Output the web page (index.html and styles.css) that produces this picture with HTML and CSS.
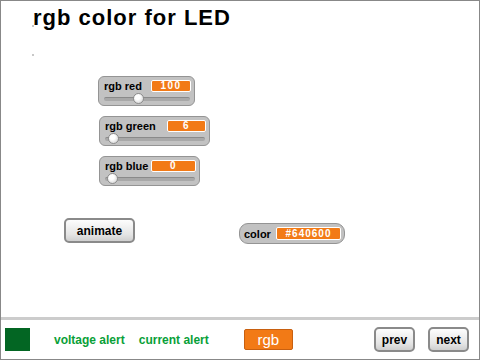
FILE: index.html
```html
<!doctype html>
<html lang="en">
<head>
	<meta charset="UTF-8">
	<title>rgb color for LED</title>
	<link rel="stylesheet" href="styles.css">
</head>
<body>
	<div id="frame">
		<div id="stage">
			<span class="dot dot1"></span>
			<span class="dot dot2"></span>
			<h1 class="title">rgb color for LED</h1>
			<div class="watchers">
				<div class="watcher red">
					<div class="row"><span class="label">rgb red</span><span class="value">100</span></div>
					<div class="slider"><div class="track"></div><span class="knob" style="left:29px"></span></div>
				</div>
				<div class="watcher green">
					<div class="row"><span class="label">rgb green</span><span class="value">6</span></div>
					<div class="slider"><div class="track"></div><span class="knob" style="left:3px"></span></div>
				</div>
				<div class="watcher blue">
					<div class="row"><span class="label">rgb blue</span><span class="value">0</span></div>
					<div class="slider"><div class="track"></div><span class="knob" style="left:2px"></span></div>
				</div>
			</div>
			<div class="actions">
				<div class="btn animate">animate</div>
				<div class="readout"><span class="label">color</span><span class="value">#640600</span></div>
			</div>
		</div>
		<div id="bar">
			<span class="swatch"></span>
			<span class="alert voltage">voltage alert</span>
			<span class="alert current">current alert</span>
			<span class="rgb">rgb</span>
			<div class="btn prev">prev</div>
			<div class="btn next">next</div>
		</div>
	</div>
</body>
</html>
```

FILE: styles.css
```css
*{
	margin:0;
	padding:0;
	box-sizing:border-box;
}
body{
	font-family:"Liberation Sans", Arial, sans-serif;
	background:#fff;
}
#frame{
	width:480px;
	height:360px;
	border:1px solid #888;
	display:flex;
	flex-direction:column;
}
#stage{
	position:relative;
	height:316px;
	display:flex;
	flex-direction:column;
	align-items:flex-start;
}
.dot{
	position:absolute;
	left:31px;
	width:2px;
	height:2px;
	background:#c8c8c8;
}
.dot1{ top:24px; }
.dot2{ top:53px; }
.title{
	font-size:22px;
	line-height:24px;
	font-weight:bold;
	letter-spacing:1px;
	color:#000;
	margin:5px 0 0 32px;
}
.watchers{
	display:flex;
	flex-direction:column;
	align-items:flex-start;
	gap:10px;
	margin:46px 0 0 97px;
}
.watcher{
	height:30px;
	background:#c2c2c2;
	border:1px solid #949494;
	border-radius:6px;
	padding:3px 3px 0 5px;
}
.watcher.red{ width:97px; }
.watcher.green{ width:111px; margin-left:1px; }
.watcher.blue{ width:101px; margin-left:1px; }
.row{
	display:flex;
	align-items:center;
	justify-content:space-between;
	height:12px;
}
.label{
	font-size:11px;
	font-weight:bold;
	white-space:nowrap;
	color:#000;
	line-height:12px;
}
.value{
	display:block;
	flex-shrink:0;
	height:12px;
	background:#f27a16;
	border:1px solid #fff;
	border-radius:2px;
	color:#fff;
	font-size:10px;
	font-weight:bold;
	line-height:10px;
	text-align:center;
	letter-spacing:1.5px;
}
.red .value{ width:40px; }
.green .value{ width:39px; }
.blue .value{ width:45px; }
.slider{
	position:relative;
	height:13px;
	display:flex;
	align-items:center;
	margin-right:1px;
}
.track{
	flex:1;
	height:4px;
	border-radius:2px;
	background:#a8a8a8;
	border-top:1px solid #8a8a8a;
}
.knob{
	position:absolute;
	top:1px;
	width:11px;
	height:11px;
	border-radius:50%;
	border:1px solid #8c8c8c;
	background:radial-gradient(circle at 40% 35%, #fff 30%, #d8d8d8 80%);
}
.actions{
	display:flex;
	align-items:flex-start;
	margin:32px 0 0 63px;
}
.btn{
	border:2px solid #8a8a8a;
	border-radius:5px;
	background:linear-gradient(#fdfdfd, #e4e4e4 70%, #cfcfcf);
	font-weight:bold;
	font-size:12px;
	color:#000;
	text-align:center;
	display:flex;
	align-items:center;
	justify-content:center;
}
.animate{
	width:71px;
	height:25px;
}
.readout{
	display:flex;
	align-items:center;
	justify-content:space-between;
	width:106px;
	height:21px;
	margin:5px 0 0 104px;
	padding:0 3px 0 4px;
	background:#c2c2c2;
	border:1px solid #949494;
	border-radius:9px;
}
.readout .value{
	width:65px;
	height:13px;
	line-height:11px;
	letter-spacing:1px;
}
#bar{
	flex:1;
	border-top:3px solid #cccccc;
	display:flex;
	align-items:center;
	padding:0 10px 0 4px;
}
.swatch{
	width:25px;
	height:23px;
	background:#036623;
}
.alert{
	font-size:12px;
	font-weight:bold;
	color:#08a038;
}
.voltage{ margin-left:24px; }
.current{ margin-left:14px; }
.rgb{
	margin-left:35px;
	width:49px;
	height:21px;
	background:#f27a16;
	border:1px solid #c86010;
	border-radius:2px;
	color:#fff;
	font-size:15px;
	line-height:19px;
	text-align:center;
}
.prev{
	margin-left:auto;
	width:41px;
	height:25px;
}
.next{
	margin-left:13px;
	width:41px;
	height:25px;
}
```
